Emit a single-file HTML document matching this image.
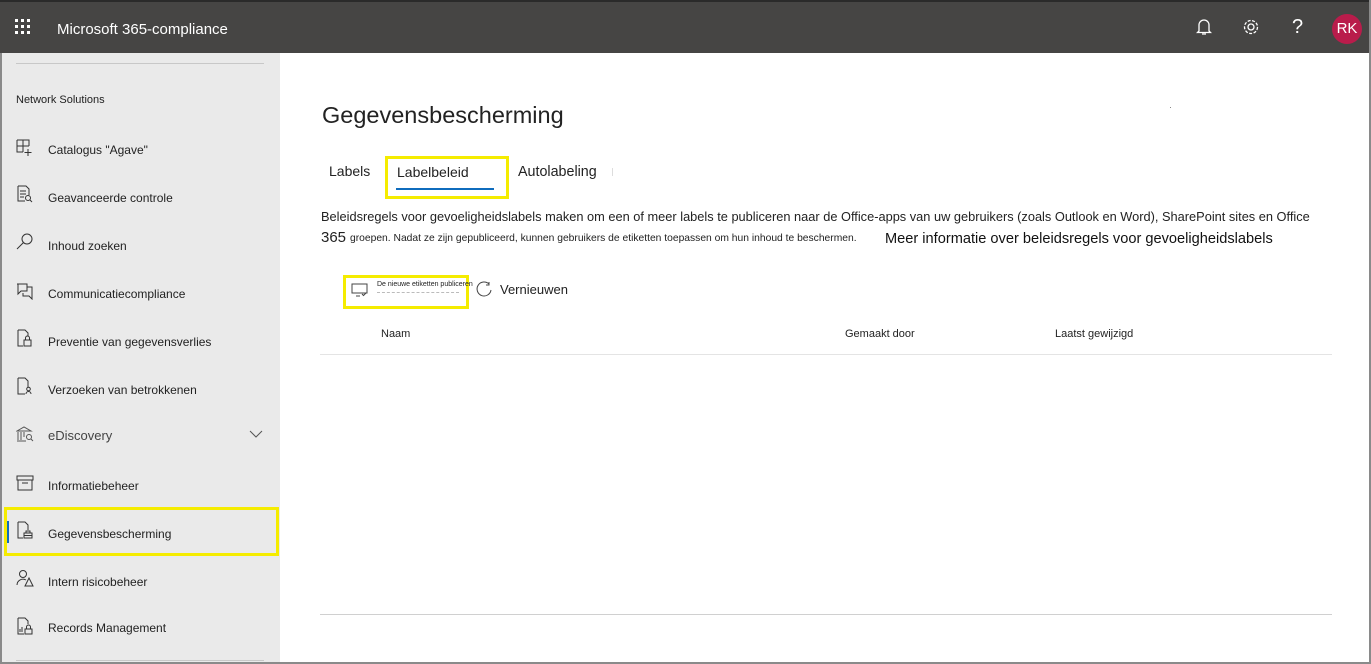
<!DOCTYPE html>
<html><head><meta charset="utf-8"><style>
*{margin:0;padding:0;box-sizing:border-box}
body{width:1371px;height:664px;overflow:hidden;background:#fff;font-family:"Liberation Sans",Arial,sans-serif;position:relative;color:#222}
.abs{position:absolute}
#top{left:0;top:0;width:1371px;height:53px;background:#464544;border-top:2px solid #2a2a2a}
#side{left:0;top:53px;width:280px;height:611px;background:#eaeaea}
.nav{position:absolute;left:48px;font-size:12px;color:#222;white-space:nowrap}
.ic{position:absolute;left:16px;width:18px;height:18px}
.frame{position:absolute;border:3px solid #f5ec00}
</style></head><body>
<div id="top" class="abs">
  <svg class="abs" style="left:15px;top:17px" width="16" height="16" fill="#fff">
    <rect x="0" y="0" width="3" height="3"/><rect x="6" y="0" width="3" height="3"/><rect x="12" y="0" width="3" height="3"/>
    <rect x="0" y="6" width="3" height="3"/><rect x="6" y="6" width="3" height="3"/><rect x="12" y="6" width="3" height="3"/>
    <rect x="0" y="12" width="3" height="3"/><rect x="6" y="12" width="3" height="3"/><rect x="12" y="12" width="3" height="3"/>
  </svg>
  <div class="abs" style="left:57px;top:19px;color:#fff;font-size:15px">Microsoft 365-compliance</div>
  <svg class="abs" style="left:1196px;top:16px" width="16" height="18" fill="none" stroke="#fff" stroke-width="1.3"><path d="M3 13V7a5 5 0 0 1 10 0v6l1.5 1.5h-13z M6 16h4"/></svg>
  <svg class="abs" style="left:1242px;top:16px" width="18" height="18" fill="none" stroke="#fff" stroke-width="1.3"><circle cx="9" cy="9" r="3"/><circle cx="9" cy="9" r="6.5" stroke-dasharray="3 1.5"/></svg>
  <div class="abs" style="left:1292px;top:14px;color:#fff;font-size:20px">?</div>
  <div class="abs" style="left:1332px;top:12px;width:30px;height:30px;border-radius:50%;background:#b91c4b;color:#fff;font-size:15px;text-align:center;line-height:30px">RK</div>
</div>
<div id="side" class="abs">
  <div class="abs" style="left:16px;top:10px;width:248px;height:1px;background:#c8c8c8"></div>
  <div class="nav" style="left:16px;top:41px;font-size:11px">Network Solutions</div>
  <svg class="ic" style="top:86px" viewBox="0 0 18 18" fill="none" stroke="#333" stroke-width="1"><path d="M1 1h12v6M1 1v12h6M7 1v12M1 7h12M12 10v7M8.5 13.5h7"/></svg>
  <div class="nav" style="top:90px">Catalogus "Agave"</div>
  <svg class="ic" style="top:132px" viewBox="0 0 18 18" fill="none" stroke="#333" stroke-width="1"><path d="M2 1h8l3 3v6M2 1v15h7M4 6h6M4 9h6M4 12h4"/><circle cx="12" cy="13" r="2.5"/><path d="M14 15l2 2"/></svg>
  <div class="nav" style="top:138px">Geavanceerde controle</div>
  <svg class="ic" style="top:180px" viewBox="0 0 18 18" fill="none" stroke="#333" stroke-width="1"><circle cx="11" cy="6" r="5"/><path d="M7.5 9.5L1 16"/></svg>
  <div class="nav" style="top:186px">Inhoud zoeken</div>
  <svg class="ic" style="top:229px" viewBox="0 0 18 18" fill="none" stroke="#333" stroke-width="1"><path d="M1 2h10v7H5l-3 3V2M7 11v3h6l3 3V5h-5"/></svg>
  <div class="nav" style="top:234px">Communicatiecompliance</div>
  <svg class="ic" style="top:276px" viewBox="0 0 18 18" fill="none" stroke="#333" stroke-width="1"><path d="M2 1h7l3 3v3M2 1v16h5"/><rect x="8" y="11" width="7" height="6"/><path d="M9.5 11V9a2 2 0 0 1 4 0v2"/></svg>
  <div class="nav" style="top:282px">Preventie van gegevensverlies</div>
  <svg class="ic" style="top:324px" viewBox="0 0 18 18" fill="none" stroke="#333" stroke-width="1"><path d="M2 1h7l3 3v6M2 1v16h7"/><circle cx="12.5" cy="12" r="1.8"/><path d="M10 17a2.5 2.5 0 0 1 5 0"/></svg>
  <div class="nav" style="top:330px">Verzoeken van betrokkenen</div>
  <svg class="ic" style="top:372px" viewBox="0 0 18 18" fill="none" stroke="#555" stroke-width="1"><path d="M1 6l7-4 7 4zM2 7v8M5 7v8M8 7v5M1 16h9"/><circle cx="13" cy="12" r="2.5"/><path d="M15 14l2 2"/></svg>
  <div class="nav" style="top:375px;font-size:13px;color:#444">eDiscovery</div>
  <svg class="abs" style="left:249px;top:377px" width="14" height="9" fill="none" stroke="#555" stroke-width="1"><path d="M1 1l6 6 6-6"/></svg>
  <svg class="ic" style="top:421px" viewBox="0 0 18 18" fill="none" stroke="#333" stroke-width="1"><path d="M1 2h16v4H1zM2 6v10h14V6M6 9h6"/></svg>
  <div class="nav" style="top:426px">Informatiebeheer</div>
  <div class="abs" style="left:6px;top:468px;width:3px;height:22px;background:#0f6cbd"></div>
  <svg class="ic" style="top:468px" viewBox="0 0 18 18" fill="none" stroke="#333" stroke-width="1"><path d="M2 1h7l3 3v5M2 1v16h5"/><rect x="8" y="12" width="8" height="5"/><path d="M10 12v-2h4v2M8 14.5h8"/></svg>
  <div class="nav" style="top:474px">Gegevensbescherming</div>
  <svg class="ic" style="top:516px" viewBox="0 0 18 18" fill="none" stroke="#333" stroke-width="1"><circle cx="7" cy="5" r="3.5"/><path d="M1 16a6 6 0 0 1 9-5M13 9l4 8H9z"/></svg>
  <div class="nav" style="top:522px">Intern risicobeheer</div>
  <svg class="ic" style="top:564px" viewBox="0 0 18 18" fill="none" stroke="#333" stroke-width="1"><path d="M2 1h7l3 3v3M2 1v16h6M4 15v-3M6 15v-5"/><rect x="9" y="12" width="7" height="5"/><path d="M10.5 12v-2a2 2 0 0 1 4 0v2"/></svg>
  <div class="nav" style="top:568px">Records Management</div>
  <div class="abs" style="left:16px;top:607px;width:248px;height:1px;background:#c8c8c8"></div>
</div>
<div class="frame" style="left:4px;top:507px;width:275px;height:49px"></div>

<div class="abs" style="left:322px;top:102px;font-size:23.5px;color:#222">Gegevensbescherming</div>
<div class="abs" style="left:1170px;top:107px;width:1px;height:1px;background:#888"></div>
<div class="abs" style="left:329px;top:163px;font-size:14px">Labels</div>
<div class="frame" style="left:385px;top:156px;width:124px;height:43px"></div>
<div class="abs" style="left:397px;top:164px;font-size:14px">Labelbeleid</div>
<div class="abs" style="left:396px;top:188px;width:98px;height:2px;background:#0f6cbd"></div>
<div class="abs" style="left:518px;top:164px;font-size:14.3px">Autolabeling</div>
<div class="abs" style="left:612px;top:168px;width:1px;height:8px;background:#ddd"></div>
<div class="abs" style="left:321px;top:209px;font-size:12.8px;color:#222;white-space:nowrap">Beleidsregels voor gevoeligheidslabels maken om een of meer labels te publiceren naar de Office-apps van uw gebruikers (zoals Outlook en Word), SharePoint sites en Office</div>
<div class="abs" style="left:321px;top:229px;font-size:15px;color:#222">365</div>
<div class="abs" style="left:350px;top:233px;font-size:10.3px;color:#222;white-space:nowrap">groepen. Nadat ze zijn gepubliceerd, kunnen gebruikers de etiketten toepassen om hun inhoud te beschermen.</div>
<div class="abs" style="left:885px;top:231px;font-size:14.6px;color:#111;white-space:nowrap">Meer informatie over beleidsregels voor gevoeligheidslabels</div>

<div class="frame" style="left:343px;top:275px;width:126px;height:34px"></div>
<svg class="abs" style="left:351px;top:283px" width="18" height="14" fill="none" stroke="#444" stroke-width="1"><rect x="1" y="1" width="15" height="9"/><path d="M5 13h4M11 11l1.5 1.5L15 10"/></svg>
<div class="abs" style="left:377px;top:281px;font-size:7px;color:#222;white-space:nowrap">De nieuwe etiketten publiceren</div>
<div class="abs" style="left:377px;top:292px;width:82px;height:1px;border-top:1px dashed #bbb"></div>
<svg class="abs" style="left:475px;top:281px" width="18" height="18" fill="none" stroke="#444" stroke-width="1"><path d="M14 3A7 7 0 1 0 16 9"/><path d="M14 1v3h-3"/></svg>
<div class="abs" style="left:500px;top:282px;font-size:13px;color:#222">Vernieuwen</div>

<div class="abs" style="left:381px;top:328px;font-size:11px">Naam</div>
<div class="abs" style="left:845px;top:328px;font-size:11px">Gemaakt door</div>
<div class="abs" style="left:1055px;top:328px;font-size:11px">Laatst gewijzigd</div>
<div class="abs" style="left:320px;top:354px;width:1012px;height:1px;background:#e4e4e4"></div>
<div class="abs" style="left:320px;top:614px;width:1012px;height:1px;background:#d0d0d0"></div>

<div class="abs" style="left:0;top:53px;width:2px;height:611px;background:#8a8a8a"></div>
<div class="abs" style="left:1369px;top:0;width:2px;height:664px;background:#8a8a8a"></div>
<div class="abs" style="left:0;top:662px;width:1371px;height:2px;background:#8a8a8a"></div>
</body></html>
